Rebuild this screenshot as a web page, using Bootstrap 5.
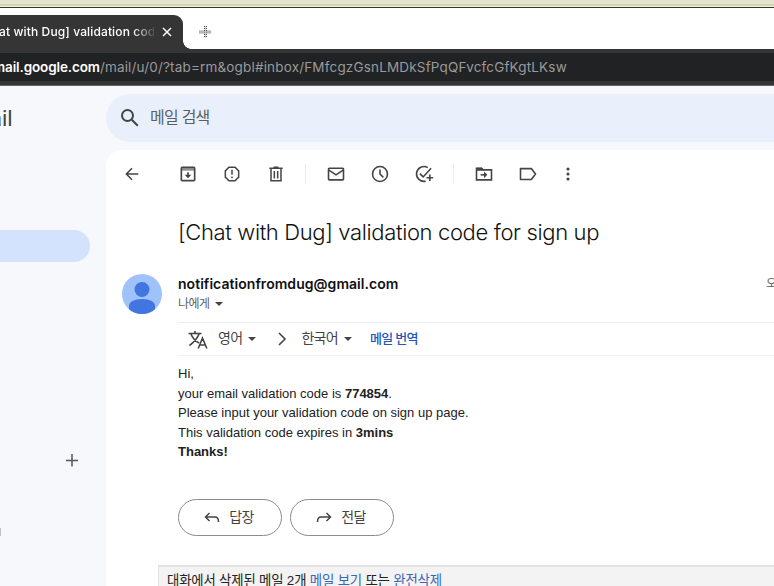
<!DOCTYPE html>
<html lang="ko">
<head>
<meta charset="utf-8">
<meta name="viewport" content="width=device-width, initial-scale=1">
<title>[Chat with Dug] validation code for sign up</title>
<link href="https://cdn.jsdelivr.net/npm/bootstrap@5.3.0/dist/css/bootstrap.min.css" rel="stylesheet">
<style>
body{height:586px;font-family:"Liberation Sans","Noto Sans CJK KR",sans-serif;color:#222;background:#f6f8fc;line-height:1}
svg{display:block;flex:none}
.desk{height:8px;background:#e4e4cb;border-bottom:1px solid #37371f;box-shadow:inset 0 -1px #eeeedb,inset 0 -3px #d3d3b8}
.tabs{height:41px;background:#fff;padding-top:7px}
.tab-on{width:183px;height:34px;background:#353535;border-top-right-radius:9px;color:#fff;font:500 12px/34px Inter,sans-serif}
.tab-name{width:155px;margin-left:-1px;letter-spacing:.13px;-webkit-mask-image:linear-gradient(90deg,#000 134px,transparent 158px);mask-image:linear-gradient(90deg,#000 134px,transparent 158px)}
.tab-curve{width:8px;height:8px;background:radial-gradient(circle at 100% 0,#fff 7.5px,#353535 8px)}
.new-tab{margin:10px 0 0 8px}
.toolbar-dark{height:37px;background:#353535;padding:4px 0;border-bottom:1px solid #666}
.address{height:28px;background:#212224;font:400 13.5px/28px Inter,sans-serif;color:#999a9c}
.address-text{margin-left:-7px;letter-spacing:.17px}
.address-text b{font-weight:600;color:#fff;letter-spacing:-.12px}
.side{width:106px}
.brand{height:64px;font:400 22px/66px Roboto,sans-serif;color:#444;margin-left:-10px}
.current{width:90px;height:32px;margin-top:80px;background:#d3e3fd;border-radius:0 16px 16px 0}
.plus{margin:188px 0 0 62px}
.cutoff{width:1px;height:8px;background:#c0c1ca;margin-top:58px}
.search{height:48px;margin-top:8px;background:#e9f0fc;border-radius:24px 0 0 24px;padding-left:12px;color:#5b5f66;font-size:16px}
.search span{margin-left:8px;letter-spacing:-.75px}
.mail{margin-top:8px;background:#fff;border-top-left-radius:16px}
.tools{height:48px;color:#444}
.tools>span{width:44px;display:flex;justify-content:center}
.tools>i{width:1px;height:20px;background:#ececec;margin:0 8px 0 7px}
.tools>.back{width:52px;margin-right:8px}
.tools>.more{width:36px}
.subject{font:300 22px/28px Inter,"Noto Sans",sans-serif;color:#111;margin:20px 0 0 72px;letter-spacing:-.36px}
.sender{margin-top:28px;padding-left:16px;height:48px}
.from{font:600 14px/20px Inter,sans-serif;color:#111;letter-spacing:.04px}
.to{font-size:12px;line-height:20px;color:#5e5e5e;letter-spacing:-.6px}
.to .caret{margin-left:6px}
.caret{width:0;height:0;border:4px solid transparent;border-top-color:#444;border-bottom:0}
.translate{height:34px;margin-left:72px;border-top:1px solid #eaedf3;border-bottom:1px solid #eff0f2;font-size:14px;color:#444;letter-spacing:-.7px;padding-bottom:2px}
.translate .caret{margin:2px 0 0 6px}
.translate .arrow{margin:2px 9px 0 16px}
.translate a{margin-left:18px;color:#2455b8;font-size:13px;text-decoration:none;font-weight:500}
.message{margin:8px 0 0 72px;font:13px/19.5px "Liberation Sans",Arial,sans-serif}
.replies{margin:37px 0 0 72px;gap:8px}
.reply{width:104px;height:37px;border:1px solid #8b8b8b;border-radius:18.5px;color:#444;font-size:14px;letter-spacing:-.7px;padding:0 3px 0 0;line-height:1;gap:8px}
.deleted{margin:29px 0 0 52px;height:30px;border:1px solid #e3e3e3;border-width:2px 0 0 1px;background:#f3f3f3;padding:5px 0 0 8px;font-size:13.4px;line-height:17px;letter-spacing:-.18px}
.deleted a{color:#3865b8;text-decoration:none}
.clock{color:#5e5e5e;font-size:12px;width:8px}
</style>
<script src="https://cdn.jsdelivr.net/npm/bootstrap@5.3.0/dist/js/bootstrap.bundle.min.js"></script>
</head>
<body class="d-flex flex-column overflow-hidden">
<div class="desk flex-shrink-0"></div>
<header class="flex-shrink-0">
  <div class="tabs d-flex">
    <div class="tab-on d-flex align-items-center overflow-hidden">
      <div class="tab-name text-nowrap overflow-hidden">at with Dug] validation code</div>
      <svg class="ms-2" width="10" height="10" viewBox="0 0 10 10" stroke="#fff" stroke-width="1.5"><path d="M1 1l8 8M9 1L1 9"/></svg>
    </div>
    <div class="tab-curve align-self-end"></div>
    <svg class="new-tab" width="13" height="14" viewBox="0 0 13 14" fill="none"><path d="M6.500 1v12M.5 7h12" stroke="#444" stroke-width="3" stroke-dasharray="1 1"/><path d="M6.500 1v12M.5 7h12" stroke="#ccc"/></svg>
  </div>
  <div class="toolbar-dark"><div class="address text-nowrap overflow-hidden"><div class="address-text"><b>mail.google.com</b>/mail/u/0/?tab=rm&amp;ogbl#inbox/FMfcgzGsnLMDkSfPqQFvcfcGfKgtLKsw</div></div></div>
</header>
<div class="d-flex flex-grow-1 overflow-hidden">
  <aside class="side flex-shrink-0 overflow-hidden">
    <div class="brand">ail</div>
    <div class="current"></div>
    <svg class="plus" width="20" height="20" viewBox="0 0 20 20" stroke="#555" stroke-width="1.5"><path d="M10 4v12.500M4 10.500h12"/></svg>
    <div class="cutoff"></div>
  </aside>
  <main class="flex-grow-1 d-flex flex-column overflow-hidden">
    <div class="search d-flex align-items-center flex-shrink-0">
      <svg width="24" height="24" viewBox="0 0 24 24" fill="none" stroke="#444" stroke-width="2"><circle cx="9.5" cy="9.5" r="5.5"/><path d="M13.800 13.800l6 6"/></svg>
      <span>메일 검색</span>
    </div>
    <section class="mail flex-grow-1">
      <div class="tools d-flex align-items-center">
        <span class="back"><svg width="20" height="20" viewBox="0 0 24 24" fill="none" stroke="currentColor" stroke-width="1.8"><path d="M19.500 12H6M12 5.200L5.200 12l6.800 6.800"/></svg></span>
        <span><svg width="20" height="20" viewBox="0 0 24 24" fill="none" stroke="currentColor" stroke-width="2"><rect x="4" y="4" width="16" height="16" rx="1"/><path d="M4 6.500h16" stroke-width="3" opacity=".6"/><path d="M12 10v5"/><path d="M8 13h8l-4 4z" fill="currentColor" stroke="none"/></svg></span>
        <span><svg width="20" height="20" viewBox="0 0 24 24" fill="none" stroke="currentColor" stroke-width="1.800"><path d="M8.300 4h7.400L20 8.300v7.400L15.700 20H8.300L4 15.700V8.300z"/><path d="M12 7v6M12 15v2"/></svg></span>
        <span><svg width="20" height="20" viewBox="0 0 24 24" fill="none" stroke="currentColor" stroke-width="1.800"><path d="M6 6v14h12V6M4 5h16M9 4h6M10 8.500v9M14 8.500v9"/></svg></span>
        <i></i>
        <span><svg width="20" height="20" viewBox="0 0 24 24" fill="none" stroke="currentColor" stroke-width="1.900"><rect x="3" y="5" width="18" height="14" rx="1"/><path d="M3 7l9 6 9-6"/></svg></span>
        <span><svg width="20" height="20" viewBox="0 0 24 24" fill="none" stroke="currentColor" stroke-width="1.900"><circle cx="12" cy="12" r="9"/><path d="M12 6.500V12l4 4"/></svg></span>
        <span><svg class="overflow-visible" width="20" height="20" viewBox="0 0 24 24" fill="none" stroke="currentColor" stroke-width="1.900"><path d="M16.500 4.300A8.900 8.900 0 1 0 14 20.600M7 11.500l4 4L20.500 5M19 12.500v8M15 16.500h8"/></svg></span>
        <i></i>
        <span><svg width="20" height="20" viewBox="0 0 24 24" fill="none" stroke="currentColor" stroke-width="1.900"><path d="M3 19V5h6l2 2h10v12z"/><path d="M3 4.500h6.500L12 8H3z" fill="currentColor" stroke="none"/><path d="M8 13h6"/><path d="M12 9l4 4-4 4z" fill="currentColor" stroke="none"/></svg></span>
        <span><svg width="20" height="20" viewBox="0 0 24 24" fill="none" stroke="currentColor" stroke-width="1.900" stroke-linejoin="round"><path d="M3 5.500h13L21 12l-5 6.500H3z"/></svg></span>
        <span class="more"><svg width="20" height="20" viewBox="0 0 24 24" fill="currentColor"><circle cx="12" cy="6" r="1.900"/><circle cx="12" cy="12" r="1.900"/><circle cx="12" cy="18" r="1.900"/></svg></span>
      </div>
      <h1 class="subject text-nowrap mb-0">[Chat with Dug] validation code for sign up</h1>
      <div class="sender d-flex">
        <svg width="40" height="40" viewBox="0 0 40 40"><defs><clipPath id="face"><circle cx="20" cy="20" r="20"/></clipPath></defs><g clip-path="url(#face)"><path fill="#a0c2fb" d="M0 0h40v40H0z"/><circle cx="20" cy="15.500" r="7.500" fill="#4175df"/><path d="M7 40v-8c0-4 5-7 13-7s13 3 13 7v8z" fill="#4175df"/></g></svg>
        <div class="ms-3 flex-grow-1">
          <div class="from">notificationfromdug@gmail.com</div>
          <div class="to d-flex align-items-center">나에게<div class="caret"></div></div>
        </div>
        <div class="clock overflow-hidden text-nowrap pt-1">오후</div>
      </div>
      <div class="translate d-flex align-items-center">
        <svg class="ms-2 mt-1" width="24" height="24" viewBox="0 0 24 24" fill="none" stroke="#444" stroke-width="1.600"><path d="M2.500 5.500h13M9 3v2.500M5 6c1.500 4 4.500 7 8 9M13 6C11.500 10.500 8 14 3.500 17.500M12.200 20.500L16.500 10l4.300 10.500M13.800 17h5.500"/></svg>
        <span class="ms-2">영어</span><div class="caret"></div>
        <svg class="arrow" width="20" height="20" viewBox="0 0 20 20" fill="none" stroke="#444" stroke-width="1.600"><path d="M7 4l6 6-6 6"/></svg>
        <span>한국어</span><div class="caret"></div>
        <a href="#">메일 번역</a>
      </div>
      <div class="message">Hi,<br>your email validation code is <b>774854</b>.<br>Please input your validation code on sign up page.<br>This validation code expires in <b>3mins</b><br><b>Thanks!</b></div>
      <div class="replies d-flex">
        <button class="btn reply d-flex align-items-center justify-content-center"><svg width="18" height="18" viewBox="0 0 18 18" fill="none" stroke="#444" stroke-width="1.500"><path d="M6.500 5L2.500 9l4 4M2.500 9H12q3.500 0 3.500 5"/></svg>답장</button>
        <button class="btn reply d-flex align-items-center justify-content-center"><svg width="18" height="18" viewBox="0 0 18 18" fill="none" stroke="#444" stroke-width="1.500"><path d="M11.500 5l4 4-4 4M15.500 9H6q-3.500 0-3.500 5"/></svg>전달</button>
      </div>
      <div class="deleted text-nowrap">대화에서 삭제된 메일 2개 <a href="#">메일 보기</a> 또는 <a href="#">완전삭제</a></div>
    </section>
  </main>
</div>
</body>
</html>
